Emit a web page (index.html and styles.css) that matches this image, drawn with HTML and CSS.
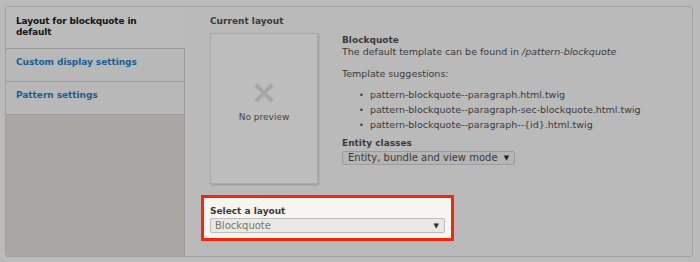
FILE: index.html
```html
<!DOCTYPE html>
<html>
<head>
<meta charset="utf-8">
<link rel="stylesheet" href="styles.css">
</head>
<body>
<div class="wrap">
  <div class="tabs">
    <div class="tab active">Layout for blockquote in default</div>
    <div class="tab link">Custom display settings</div>
    <div class="tab link">Pattern settings</div>
  </div>
  <div class="main">
    <div class="title">Current layout</div>
    <div class="row">
      <div class="preview">
        <svg class="x" width="22" height="22" viewBox="0 0 22 22"><path d="M3 3 L19 19 M19 3 L3 19" stroke="#a6a6a6" stroke-width="4"/></svg>
        <div class="np">No preview</div>
      </div>
      <div class="info">
        <div class="bold">Blockquote</div>
        <div>The default template can be found in <em>/pattern-blockquote</em></div>
        <div class="ts">Template suggestions:</div>
        <ul>
          <li>pattern-blockquote--paragraph.html.twig</li>
          <li>pattern-blockquote--paragraph-sec-blockquote.html.twig</li>
          <li>pattern-blockquote--paragraph--{id}.html.twig</li>
        </ul>
        <div class="bold">Entity classes</div>
        <div class="sel small">Entity, bundle and view mode <span class="arr">▼</span></div>
      </div>
    </div>
    <div class="hl">
      <div class="bold">Select a layout</div>
      <div class="sel big"><span>Blockquote</span><span class="arr">▼</span></div>
    </div>
  </div>
</div>
</body>
</html>
```
FILE: styles.css
```css
html, body { margin: 0; padding: 0; }
body {
  background: #bababa;
  font-family: "DejaVu Sans", sans-serif;
  font-size: 9.5px;
  color: #3a3a3a;
  width: 700px;
  height: 262px;
  overflow: hidden;
}
.wrap {
  margin: 6px 7px 0 5px;
  height: 251px;
  border: 1px solid #a2a2a2;
  border-radius: 3px;
  display: flex;
  box-sizing: border-box;
}
.tabs {
  width: 178px;
  flex: none;
  background: #a8a7a3;
  border-right: 1px solid #9c9c9c;
  border-radius: 3px 0 0 3px;
}
.tab {
  box-sizing: border-box;
  border-bottom: 1px solid #9a9a9a;
  padding: 0 10px;
  font-size: 9px;
}
.tab.active {
  background: #bbbbbb;
  margin-right: -1px;
  height: 42px;
  padding: 9px 40px 0 10px;
  font-weight: bold;
  color: #141414;
  line-height: 11px;
  letter-spacing: -0.15px;
}
.tab.link {
  background: #b8b8b8;
  height: 33px;
  padding-top: 8px;
  font-weight: bold;
  color: #1a5e94;
  letter-spacing: -0.05px;
}
.main {
  flex: 1;
  padding: 8px 0 0 25px;
}
.bold { font-weight: bold; color: #3a3a3a; font-size: 9px; }
.title { font-weight: bold; line-height: 12px; font-size: 9px; }
.row { display: flex; margin-top: 6px; }
.preview {
  width: 106px;
  border: 1px solid #a9a9a9;
  background: #bdbdbd;
  box-shadow: 1px 1px 2px rgba(0,0,0,0.18);
  display: flex;
  flex-direction: column;
  align-items: center;
  padding-top: 48px;
  box-sizing: content-box;
  height: 101px;
}
.np { margin-top: 8px; color: #444; font-size: 9px; }
.info { margin-left: 24px; padding-top: 2px; line-height: 11px; }
.ts { margin-top: 11px; }
ul { margin: 9px 0 5px 0; padding-left: 28px; line-height: 14px; list-style: none; }
li::before { content: "•"; margin-left: -11px; width: 11px; display: inline-block; font-size: 8px; }
.sel {
  border: 1px solid #9d9d9d;
  border-radius: 2px;
  box-sizing: border-box;
}
.sel.small {
  display: inline-block;
  background: #b5b5b5;
  margin-top: 2px;
  height: 14px;
  line-height: 12px;
  padding: 0 5px 0 5px;
  font-size: 10px;
}
.arr { font-size: 7px; margin-left: 3px; vertical-align: 1px; color: #222; }
.hl {
  margin: 11px 0 0 -9px;
  width: 253px;
  height: 46px;
  box-sizing: border-box;
  border: 3px solid #f5260a;
  background: #f6f5f0;
  padding: 8px 0 0 6px;
}
.hl .bold { line-height: 11px; }
.sel.big {
  width: 235px;
  height: 15px;
  margin-top: 1px;
  background: #e9e8e3;
  border-color: #bdbdbd;
  display: flex;
  justify-content: space-between;
  align-items: center;
  padding: 0 5px 0 4px;
  font-size: 10px;
  color: #777;
}
.sel.big .arr { color: #333; }
```
